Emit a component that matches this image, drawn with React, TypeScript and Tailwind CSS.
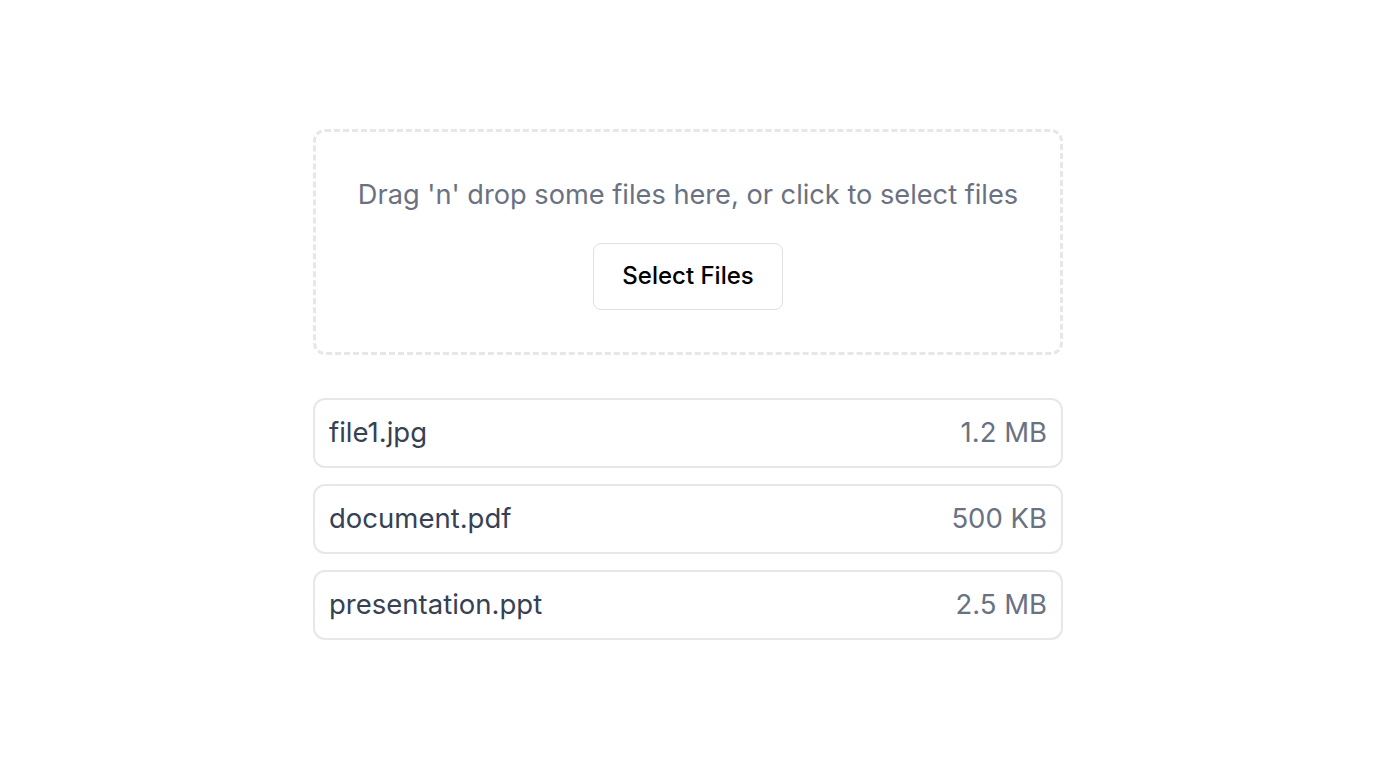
const files = [
  { name: "file1.jpg", size: "1.2 MB" },
  { name: "document.pdf", size: "500 KB" },
  { name: "presentation.ppt", size: "2.5 MB" },
];

export default function App() {
  return (
    <div className="min-h-screen bg-white flex items-center justify-center font-['Inter',sans-serif]">
      <div className="w-[750px] flex flex-col gap-[43px]">
        <div className="border-[3px] border-dashed border-[#e5e7eb] rounded-xl px-4 pt-[43px] pb-[42px] flex flex-col items-center gap-[28px]">
          <p className="text-[27.2px] leading-[40px] text-gray-500 text-center whitespace-nowrap">
            Drag 'n' drop some files here, or click to select files
          </p>
          <button className="border border-[#e0e0e0] rounded-lg px-7 h-[67px] text-[24px] font-medium text-black bg-white">
            Select Files
          </button>
        </div>
        <ul className="flex flex-col gap-4">
          {files.map((file) => (
            <li
              key={file.name}
              className="flex items-center justify-between border-2 border-[#e5e7eb] rounded-xl px-[14px] h-[70px]"
            >
              <span className="text-[27.5px] text-gray-700">{file.name}</span>
              <span className="text-[27.5px] text-gray-500">{file.size}</span>
            </li>
          ))}
        </ul>
      </div>
    </div>
  );
}
